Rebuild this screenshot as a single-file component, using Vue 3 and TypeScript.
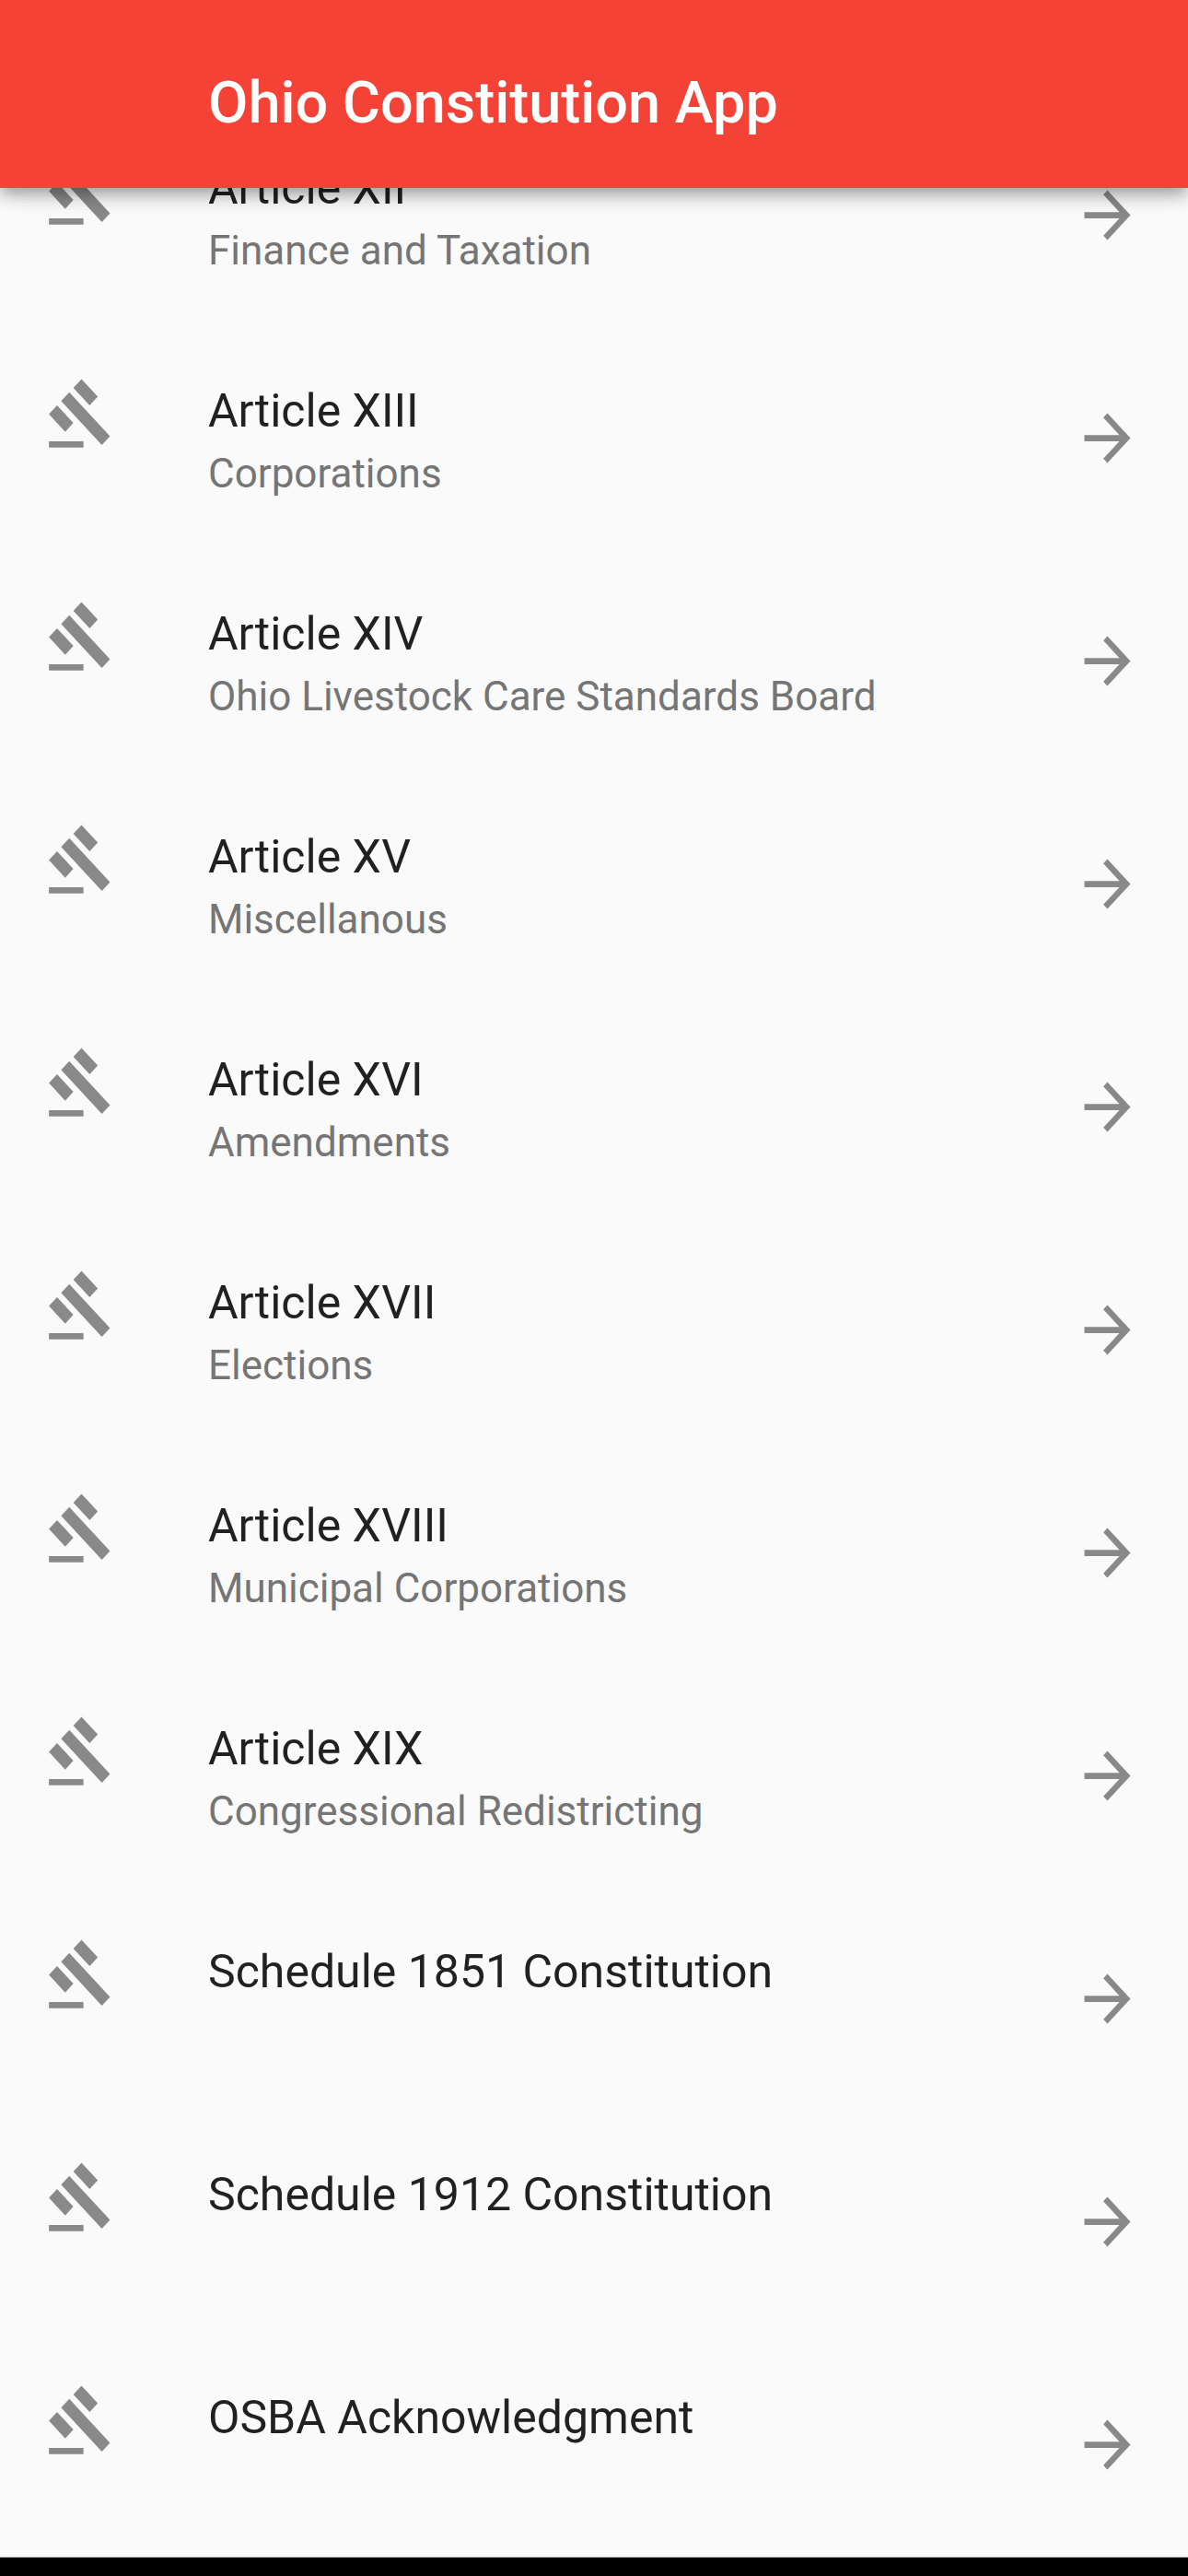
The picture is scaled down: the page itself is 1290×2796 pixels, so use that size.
<script setup lang="ts">
interface Entry {
  title: string
  subtitle?: string
}

const entries: Entry[] = [
  { title: 'Article XII', subtitle: 'Finance and Taxation' },
  { title: 'Article XIII', subtitle: 'Corporations' },
  { title: 'Article XIV', subtitle: 'Ohio Livestock Care Standards Board' },
  { title: 'Article XV', subtitle: 'Miscellanous' },
  { title: 'Article XVI', subtitle: 'Amendments' },
  { title: 'Article XVII', subtitle: 'Elections' },
  { title: 'Article XVIII', subtitle: 'Municipal Corporations' },
  { title: 'Article XIX', subtitle: 'Congressional Redistricting' },
  { title: 'Schedule 1851 Constitution' },
  { title: 'Schedule 1912 Constitution' },
  { title: 'OSBA Acknowledgment' },
]
</script>

<template>
  <div class="screen">
    <header class="app-bar">
      <h1 class="app-title">Ohio Constitution App</h1>
    </header>
    <main class="content">
      <ul class="list">
        <li v-for="entry in entries" :key="entry.title">
          <a class="row" href="#">
            <svg class="icon gavel" viewBox="0 0 24 24" preserveAspectRatio="none" aria-hidden="true">
              <path d="M1 21h12v2H1zM5.245 8.07l2.83-2.827 14.14 14.142-2.828 2.828zM12.317 1l5.657 5.656-2.83 2.83-5.654-5.66zM3.825 9.485l5.657 5.657-2.828 2.828-5.657-5.657z" />
            </svg>
            <span class="text">
              <span class="title">{{ entry.title }}</span>
              <span v-if="entry.subtitle" class="subtitle">{{ entry.subtitle }}</span>
            </span>
            <svg class="icon" viewBox="0 0 24 24" preserveAspectRatio="none" aria-hidden="true">
              <path d="M12 4l-1.41 1.41L16.17 11H4v2h12.17l-5.58 5.59L12 20l8-8z" />
            </svg>
          </a>
        </li>
      </ul>
    </main>
    <div class="system-bar"></div>
  </div>
</template>

<style>
body {
  margin: 0;
  background: #fafafa;
}
</style>

<style scoped>
.screen {
  display: flex;
  flex-direction: column;
  height: 100vh;
  overflow: hidden;
  background: #fafafa;
  font-family: Roboto, "Liberation Sans", sans-serif;
}

.app-bar {
  position: relative;
  z-index: 1;
  flex: none;
  box-sizing: border-box;
  height: 204px;
  padding: 76px 50px 0 226px;
  background: #f44336;
  box-shadow:
    0 6px 12px -3px rgba(0, 0, 0, 0.2),
    0 12px 15px 0 rgba(0, 0, 0, 0.14),
    0 3px 30px 0 rgba(0, 0, 0, 0.12);
}

.app-title {
  margin: 0;
  color: #fff;
  font-size: 63px;
  font-weight: 500;
  line-height: 72px;
}

/* The list rests at the end of its scroll range. */
.content {
  flex: 1;
  min-height: 0;
  display: flex;
  flex-direction: column;
  justify-content: flex-end;
  overflow: hidden;
}

.list {
  margin: 0;
  padding: 0 0 1px;
  list-style: none;
}

.row {
  display: flex;
  align-items: center;
  box-sizing: border-box;
  height: 242px;
  padding: 0 50px;
  color: inherit;
  text-decoration: none;
}

.icon {
  flex: none;
  width: 75px;
  height: 81px;
  fill: #898989;
}

.gavel {
  align-self: flex-start;
  margin-top: 54px;
}

.text {
  flex: 1;
  min-width: 0;
  align-self: flex-start;
  display: flex;
  flex-direction: column;
  margin-left: 101px;
  padding-top: 60px;
}

.title {
  color: #212121;
  font-size: 50px;
  line-height: 64px;
}

.subtitle {
  color: #757575;
  font-size: 44px;
  line-height: 72px;
}

.system-bar {
  flex: none;
  height: 20px;
  border-top: 1px solid #b8bfb8;
  background: #000;
}
</style>
